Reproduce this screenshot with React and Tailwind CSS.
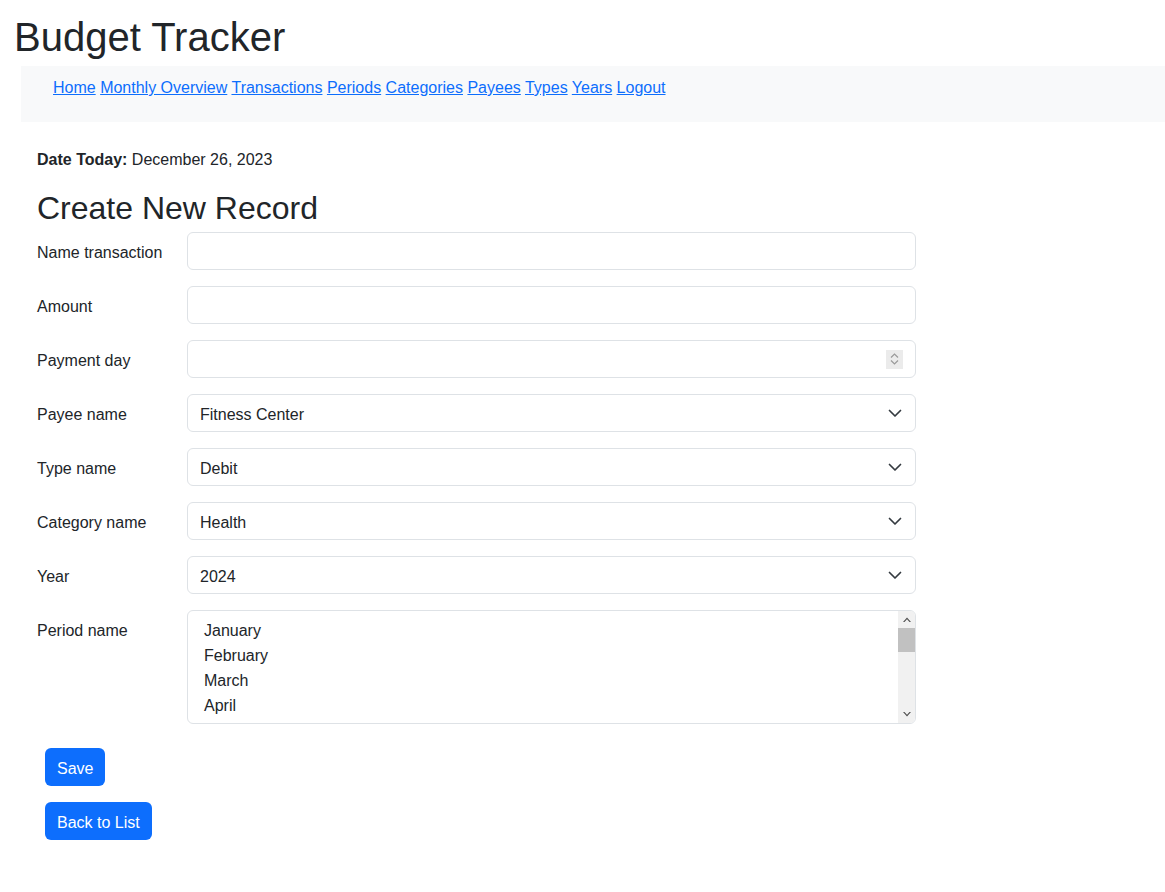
const navLinks = ["Home", "Monthly Overview", "Transactions", "Periods", "Categories", "Payees", "Types", "Years", "Logout"];

const months = ["January", "February", "March", "April"];

function Chevron() {
    return (
        <svg width="16" height="12" viewBox="0 0 16 12" fill="none" className="shrink-0">
            <path d="M2.5 3.5 8 9 13.5 3.5" stroke="#343a40" strokeWidth="1.7" strokeLinecap="round" strokeLinejoin="round" />
        </svg>
    );
}

function TextInput() {
    return (
        <input
            type="text"
            className="h-[38px] w-[729px] rounded-[6px] border border-[#dee2e6] bg-white px-[12px] text-[16px] outline-none"
        />
    );
}

function NumberInput() {
    return (
        <div className="flex h-[38px] w-[729px] items-center rounded-[6px] border border-[#dee2e6] bg-white pl-[12px] pr-[12px]">
            <input type="text" className="min-w-0 flex-1 bg-transparent text-[16px] outline-none" />
            <div className="flex h-[19px] w-[17px] flex-col items-center justify-center gap-[2px] bg-[#ebebeb]">
                <svg width="9" height="5" viewBox="0 0 9 5" fill="none">
                    <path d="M1 4.5 4.5 1 8 4.5" stroke="#9a9a9a" strokeWidth="1.2" />
                </svg>
                <svg width="9" height="5" viewBox="0 0 9 5" fill="none">
                    <path d="M1 0.5 4.5 4 8 0.5" stroke="#9a9a9a" strokeWidth="1.2" />
                </svg>
            </div>
        </div>
    );
}

function SelectBox({ value }) {
    return (
        <div className="flex h-[38px] w-[729px] items-center justify-between rounded-[6px] border border-[#dee2e6] bg-white pl-[12px] pr-[12px] text-[16px]">
            <span className="pt-[4px]">{value}</span>
            <Chevron />
        </div>
    );
}

function MultiSelect() {
    return (
        <div className="flex h-[114px] w-[729px] overflow-hidden rounded-[6px] border border-[#dee2e6] bg-white">
            <ul className="flex-1 pl-[12px] pt-[7px]">
                {months.map((m) => (
                    <li key={m} className="h-[25px] px-[4px] text-[16px] leading-[25px]">
                        {m}
                    </li>
                ))}
            </ul>
            <div className="flex w-[17px] flex-col bg-[#f1f1f1]">
                <div className="flex h-[17px] items-center justify-center">
                    <svg width="8" height="5" viewBox="0 0 8 5">
                        <path d="M0 5 4 0.5 8 5 6.5 5 4 2.3 1.5 5Z" fill="#505050" />
                    </svg>
                </div>
                <div className="h-[24px] bg-[#c1c1c1]" />
                <div className="flex-1" />
                <div className="flex h-[17px] items-center justify-center">
                    <svg width="8" height="5" viewBox="0 0 8 5">
                        <path d="M0 0 4 4.5 8 0 6.5 0 4 2.7 1.5 0Z" fill="#505050" />
                    </svg>
                </div>
            </div>
        </div>
    );
}

function FormRow({ label, children }) {
    return (
        <div className="flex">
            <label className="w-[150px] shrink-0 pt-[9px] text-[16px] leading-[24px]">{label}</label>
            {children}
        </div>
    );
}

export default function App() {
    return (
        <div className="min-h-screen bg-white font-['Liberation_Sans',Arial,sans-serif] text-[16px] leading-[24px] text-[#212529]">
            <h1 className="pl-[14px] pt-[13px] text-[40px] font-normal leading-[48px]">Budget Tracker</h1>

            <nav className="ml-[21px] mt-[5px] h-[56px] bg-[#f8f9fa] pl-[32px] pt-[10px]">
                {navLinks.map((link, i) => (
                    <span key={link}>
                        <a href="#" className="text-[#0d6efd] underline">
                            {link}
                        </a>
                        {i < navLinks.length - 1 ? " " : ""}
                    </span>
                ))}
            </nav>

            <main className="pl-[37px] pt-[26px]">
                <p>
                    <strong className="font-bold">Date Today:</strong> December 26, 2023
                </p>

                <h2 className="mt-[17px] text-[32px] font-normal leading-[38px]">Create New Record</h2>

                <form className="mt-[5px] flex flex-col gap-[16px]">
                    <FormRow label="Name transaction">
                        <TextInput />
                    </FormRow>
                    <FormRow label="Amount">
                        <TextInput />
                    </FormRow>
                    <FormRow label="Payment day">
                        <NumberInput />
                    </FormRow>
                    <FormRow label="Payee name">
                        <SelectBox value="Fitness Center" />
                    </FormRow>
                    <FormRow label="Type name">
                        <SelectBox value="Debit" />
                    </FormRow>
                    <FormRow label="Category name">
                        <SelectBox value="Health" />
                    </FormRow>
                    <FormRow label="Year">
                        <SelectBox value="2024" />
                    </FormRow>
                    <FormRow label="Period name">
                        <MultiSelect />
                    </FormRow>
                </form>

                <div className="mt-[24px] flex flex-col items-start gap-[16px] pl-[8px]">
                    <button type="button" className="h-[38px] rounded-[6px] bg-[#0d6efd] px-[12px] pt-[4px] text-[16px] text-white">
                        Save
                    </button>
                    <button type="button" className="h-[38px] rounded-[6px] bg-[#0d6efd] px-[12px] pt-[4px] text-[16px] text-white">
                        Back to List
                    </button>
                </div>
            </main>
        </div>
    );
}
